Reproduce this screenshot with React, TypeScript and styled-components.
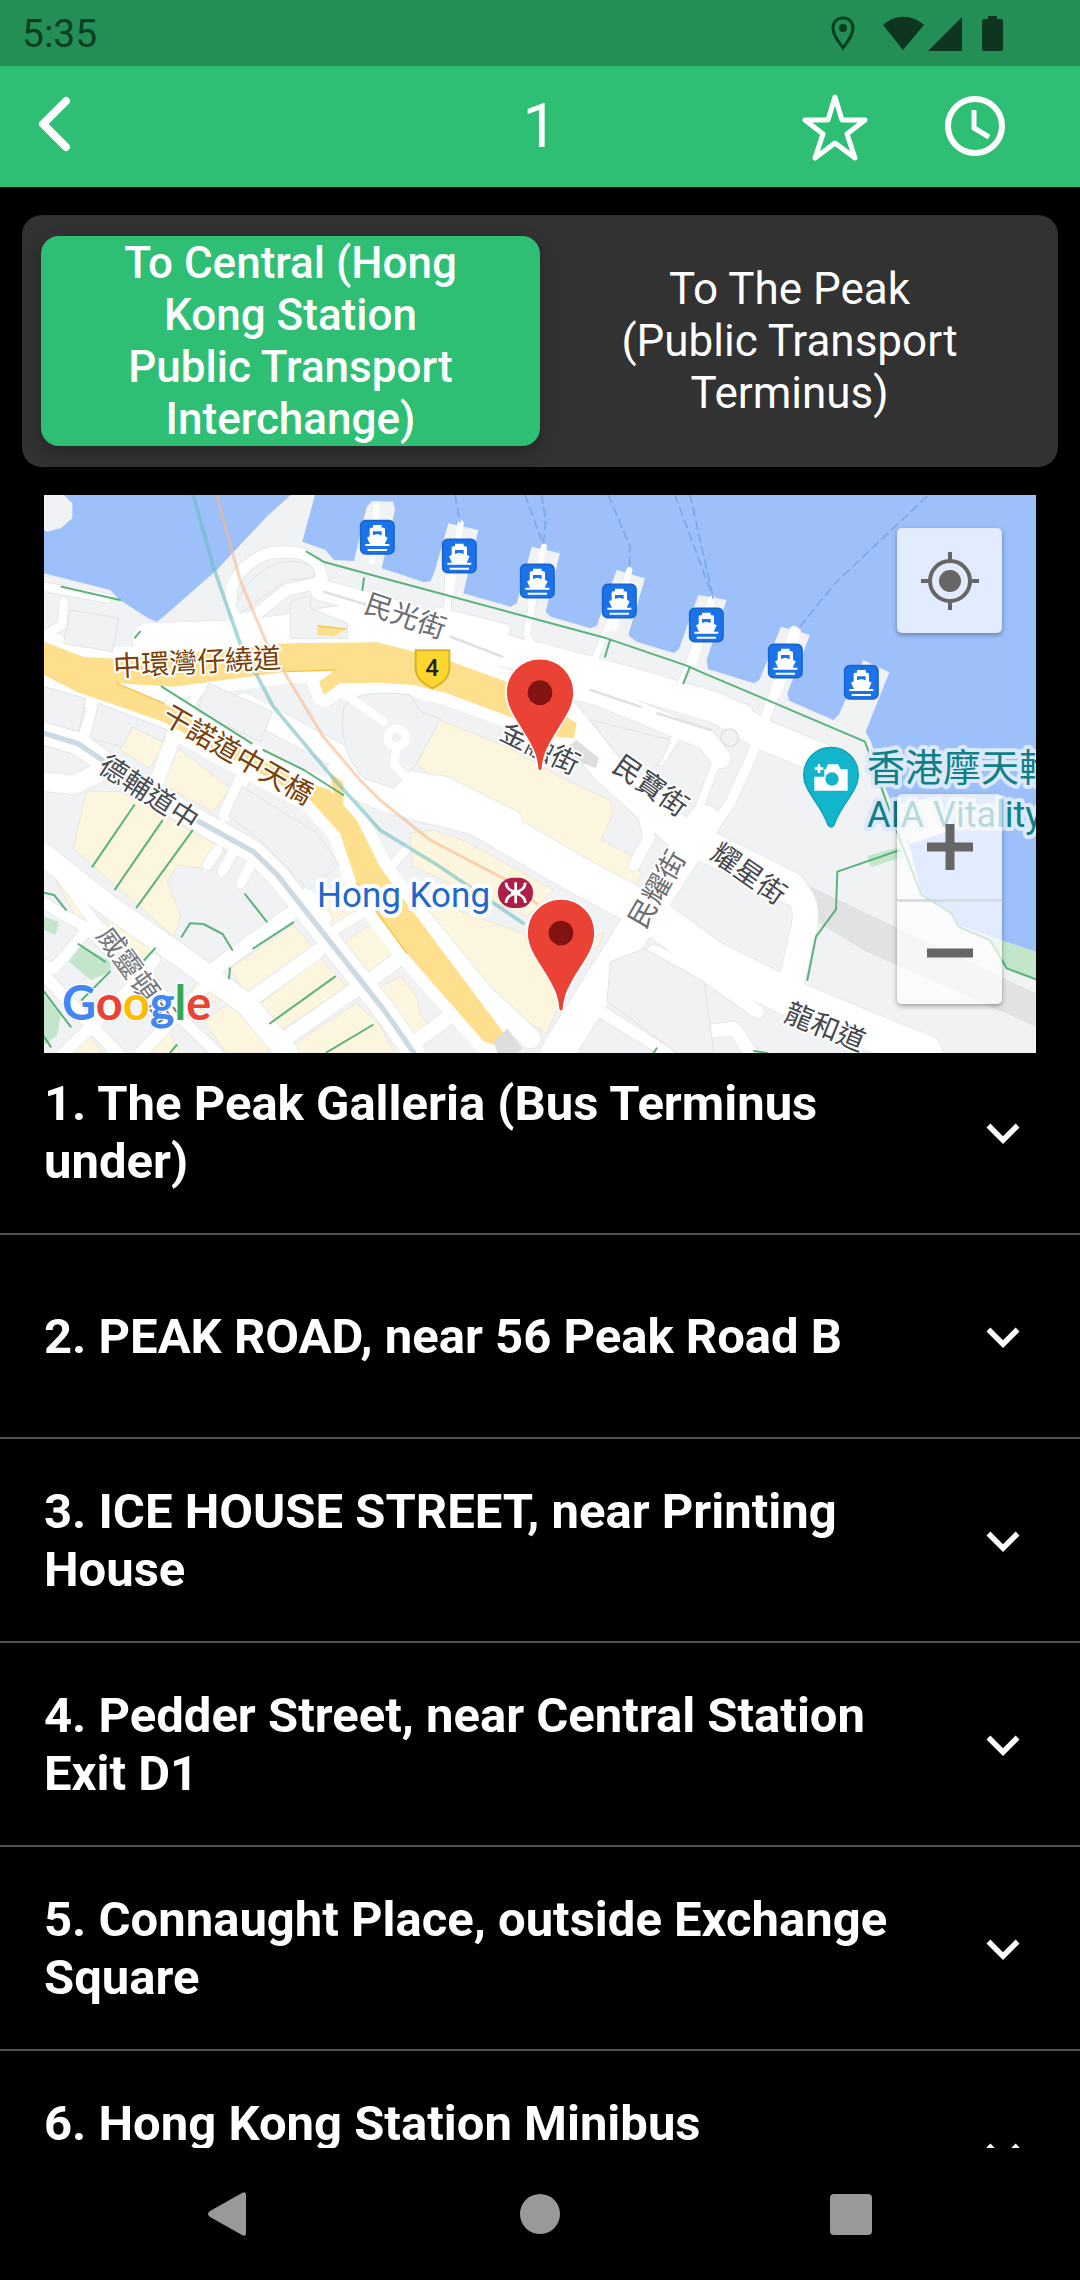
import React, { useState } from "react";
import styled, { createGlobalStyle } from "styled-components";

const GlobalStyle = createGlobalStyle`
  * { box-sizing: border-box; }
  body { margin: 0; background: #000; }
  button { font: inherit; color: inherit; border: 0; padding: 0; background: none; cursor: pointer; }
`;

const Screen = styled.div`
  display: flex;
  flex-direction: column;
  height: 100vh;
  overflow: hidden;
  background: #000;
  color: #fff;
  font-family: Roboto, "Noto Sans CJK TC", sans-serif;
`;

const StatusBar = styled.div`
  display: flex;
  flex: none;
  align-items: center;
  justify-content: space-between;
  height: 66px;
  padding: 2px 77px 0 22px;
  background: #238f57;
  color: #06401f;
  font-size: 39px;
  line-height: 48px;
`;

const StatusIcons = styled.div`
  display: flex;
  align-items: center;
  color: #0d3520;
  svg { display: block; }
`;

const Header = styled.header`
  display: grid;
  flex: none;
  grid-template-columns: 1fr auto 1fr;
  align-items: center;
  height: 121px;
  padding: 0 66px 2px 22px;
  background: #2ebf74;
`;

const Title = styled.h1`
  margin: 0 0 0 44px;
  font-size: 62px;
  font-weight: 400;
  line-height: 72px;
`;

const HeaderActions = styled.div`
  display: flex;
  justify-content: flex-end;
  gap: 71px;
`;

const IconButton = styled.button`
  display: flex;
  align-items: center;
  justify-self: start;
  svg { display: block; }
`;

const Tabs = styled.div`
  display: grid;
  flex: none;
  grid-template-columns: 1fr 1fr;
  margin: 28px 22px 28px;
  padding: 21px 19px;
  border-radius: 20px;
  background: #323232;
`;

const Tab = styled.button<{ $active: boolean }>`
  min-height: 210px;
  padding: 0 66px;
  border-radius: 18px;
  background: ${(p) => (p.$active ? "#2ebf74" : "transparent")};
  box-shadow: ${(p) => (p.$active ? "0 6px 16px rgba(0, 0, 0, 0.25)" : "none")};
  font-size: 44px;
  font-weight: ${(p) => (p.$active ? 500 : 400)};
  line-height: 52px;
  text-align: center;
`;

const MapFrame = styled.section`
  position: relative;
  flex: none;
  margin: 0 44px;
  aspect-ratio: 16 / 9;
  overflow: hidden;
  background: #f1f3f4;
`;

const MapDrawing = styled.svg`
  display: block;
  width: 100%;
  height: 100%;
`;

const MapControls = styled.div`
  position: absolute;
  inset: 33px 34px 49px auto;
  display: flex;
  flex-direction: column;
  justify-content: space-between;
`;

const ControlGroup = styled.div`
  border-radius: 5px;
  background: rgba(255, 255, 255, 0.7);
  box-shadow: 0 2px 5px rgba(0, 0, 0, 0.35);
`;

const MapButton = styled.button`
  display: flex;
  align-items: center;
  justify-content: center;
  width: 105px;
  height: 105px;
  color: #666;
  & + & { border-top: 3px solid rgba(210, 214, 220, 0.8); }
`;

const StopViewport = styled.div`
  flex: 1;
  min-height: 0;
  overflow: hidden;
`;

const StopList = styled.ol`
  margin: -22px 0 0;
  padding: 0;
  list-style: none;
`;

const StopRow = styled.button`
  display: flex;
  align-items: center;
  justify-content: space-between;
  gap: 56px;
  width: 100%;
  min-height: 204px;
  padding: 2px 44px 0;
  border-bottom: 2px solid #505050;
  font-size: 49px;
  font-weight: 700;
  line-height: 58px;
  text-align: left;
  svg { display: block; flex: none; }
`;

const NavBar = styled.nav`
  display: flex;
  flex: none;
  align-items: center;
  justify-content: center;
  gap: 249px;
  height: 132px;
  color: #999;
`;

const NavButton = styled.button`
  display: flex;
  align-items: center;
  justify-content: center;
  width: 62px;
  height: 62px;
`;

const WATER = [
  "M0 0H740L668 65 518 225 353 370 338 380 313 370 228 315 198 285 0 235Z",
  "M813 0L775 140 845 165 870 195 930 198 968 35 985 18 1048 20 1053 45 1013 220 1060 235 1140 262 1160 258 1173 225 1213 85 1303 105 1258 295 1400 335 1418 325 1463 155 1548 175 1505 350 1520 365 1640 400 1658 392 1718 225 1803 250 1753 420 1778 440 1890 474 1905 462 1963 300 2048 315 1988 495 1992 522 2130 565 2146 555 2211 395 2298 420 2230 595 2236 617 2368 675 2384 660 2458 495 2536 532 2465 710 2483 745 2523 875 2598 1060 2633 1200 2718 1250 2743 1290 2838 1325 2976 1370V0Z",
];

const CREAM = [
  "M268 695L363 745 318 820 228 765Z",
  "M403 760L558 880 508 950 358 870Z",
  "M128 890H230L430 1000 545 1065 505 1125 400 1110 370 1160 410 1260 390 1325 88 1060Z",
  "M1188 675L1388 755 1548 845 1640 890 1698 915 1708 955 1670 1035 1760 1080 1793 1140 1753 1205 1408 1015 1248 925 1188 865 1118 805Z",
  "M1098 1015L1168 1005 1268 1040 1528 1185 1448 1265 1108 1115Z",
  "M1118 1215L1208 1235 1438 1315 1548 1525 1508 1615 1360 1525 1248 1415Z",
  "M1640 1340L1678 1310 1665 1350 1640 1365Z",
  "M558 1420L748 1290 808 1355 608 1495Z",
  "M643 1530L828 1390 908 1475 698 1615Z",
  "M738 1655L938 1525 1008 1590 1050 1674H750Z",
  "M478 1575L558 1525 678 1655 668 1674H548Z",
  "M808 1245L910 1160 950 1235 875 1305Z",
  "M903 1340L1010 1270 1088 1380 985 1445Z",
  "M1010 1475L1070 1445 1120 1510 1130 1560 1160 1600 1120 1630Z",
  "M78 1110L180 1230 330 1365 300 1395 200 1300Z",
  "M18 1120L120 1265 105 1285Z",
  "M60 1674L125 1605 175 1674Z",
  "M270 1674L360 1580 410 1674Z",
  "M430 1510L460 1455 525 1500 450 1580Z",
];

const PARKS = [
  "M2838 1325L2976 1370V1453L2888 1420Z",
  "M75 1400L110 1350 200 1400 200 1430 140 1455Z",
  "M0 1265L45 1280 35 1320 0 1305Z",
  "M0 1500L50 1560 40 1620 0 1650Z",
  "M2470 1082L2565 1057 2580 1085 2480 1117Z",
];

const BLOCKS = [
  "M80 345L225 370 205 470 60 445Z",
  "M0 575L125 610 105 710 0 680Z",
  "M165 625L370 705 355 740 265 695 235 755 140 730Z",
  "M495 565L685 650 650 740 460 650Z",
  "M595 875L820 1015 885 1110 795 1185 655 1040 555 965Z",
  "M575 330C600 270 660 200 740 200S820 240 800 250L730 255 590 355Z",
  "M900 640C920 600 980 585 1100 600L1130 650 1190 672 1118 805 1050 880 960 850C910 800 885 720 900 640Z",
  "M740 320L800 300V340L910 385V430H740Z",
  "M1640 675L1880 735 1850 800 1790 850 1720 780Z",
  "M1700 1400L1800 1360 1980 1460 2010 1674H1900L1690 1520Z",
];

const GREEN_WALKS = [
  "M788 170L838 200 953 232 1008 247 1448 365 1688 430 1928 512 1968 530 2158 610 2463 740 2513 880 2568 1035 2633 1200 2723 1255 2743 1295 2838 1335 2888 1420 2976 1453",
  "M53 275L228 315", "M353 575L623 745M658 765L780 825 898 900", "M273 428L288 410",
  "M1698 435L1683 485", "M1938 515L1918 565", "M960 250L955 285",
  "M271 930L145 1115", "M355 977L213 1183", "M445 1007L278 1237", "M603 1197L668 1280",
  "M413 1325L438 1285 478 1287 536 1317 565 1365", "M748 1282L628 1360", "M558 1420L555 1450",
  "M873 1445L678 1585", "M986 1590L848 1672", "M333 1360L301 1395", "M0 1193L30 1200 66 1245",
  "M103 1347L183 1400M198 1430L113 1515", "M0 1490L80 1595", "M0 1625L20 1655", "M398 1650L378 1674",
  "M2568 1065L2380 1130 2376 1243 2316 1325 2290 1455", "M1838 1660L1828 1674", "M2130 1668L2170 1674",
];

const ROADS: [number, string][] = [
  [34, "M310 450L548 395 628 365 728 285 830 262 860 290"],
  [34, "M590 370C550 320 550 270 600 220C650 170 700 165 770 175C820 190 838 230 835 280"],
  [62, "M830 285L1000 330 1220 400 1450 470"],
  [36, "M1180 355L1380 405M1310 450L1340 400"],
  [90, "M310 430L620 420 900 375 1208 440 1488 490 1768 565 2020 640 2160 720 2330 790"],
  [60, "M1488 560L1660 600 1988 735 2030 790"],
  [28, "M1968 590L2110 645M1968 650L2160 740"],
  [20, "M1215 200L1210 350M1475 270L1448 420 1480 470M1720 330L1670 450 1640 520M1965 420L1930 520 1890 610"],
  [30, "M2250 410L2200 570 2160 680 2120 790 2060 920 2000 1010"],
  [24, "M1900 720L1850 800M2025 780L1950 980"],
  [96, "M1560 660L1690 820 1900 1010 2080 1100 2240 1180"],
  [76, "M2200 1150C2270 1190 2295 1220 2280 1300L2240 1470"],
  [70, "M600 630L880 780 1010 850 1200 880 1400 980"],
  [110, "M900 840L1040 900 1300 965 1600 1140 1808 1250 2000 1390 2240 1510 2480 1610 2640 1674"],
  [100, "M1980 980L1780 1290 1660 1480 1540 1674"],
  [34, "M1800 960L1815 1030 1770 1110M1640 1530L1870 1674"],
  [40, "M1830 1370L2000 1450 2140 1550"],
  [40, "M1970 1674L1990 1610 2070 1600 2120 1674"],
  [66, "M0 715L100 745 200 815 450 970 628 1070 700 1140 1020 1545 1110 1674"],
  [66, "M0 1080L190 1230 420 1390 610 1530 730 1674"],
  [56, "M0 860L90 870 160 835"],
  [44, "M155 630L118 750M395 710L338 860M600 840L545 960"],
  [44, "M735 1260L500 1430M820 1370L610 1520M925 1490L710 1640M1080 1380L960 1470M1210 1570L1100 1650"],
  [30, "M880 1300L960 1250M790 1190L850 1270M520 1065L490 1110M565 1075L535 1130M620 1110L590 1165"],
  [32, "M20 1100L150 1280 30 1420 0 1410M0 1225L130 1300 190 1360M150 1280L280 1400 400 1560 520 1674"],
  [36, "M0 1440L150 1600 220 1674M60 1674L260 1480 330 1395M290 1674L440 1520 520 1440"],
  [60, "M1100 1230L1320 1500 1460 1630"],
  [26, "M1020 1140L1090 1060M990 660L1060 790 1110 870 1040 880"],
  [26, "M0 420L55 390 60 320M0 275L190 310"],
  [24, "M480 560L430 650M940 610L1040 680"],
];

const HIGHWAY =
  "M0 440L118 485 228 492 480 470 728 445 1000 442 1208 495 1388 560 1500 620 1598 685 1590 730 1538 725 1398 665 1208 595 1108 570 1008 563 888 565 840 600 825 560 873 525 728 530 388 575 218 565 360 625 600 770 780 860 858 885 938 975 1008 1115 1058 1185 1193 1365 1380 1615 1355 1650 1320 1640 1088 1375 1000 1260 938 1165 888 1015 798 915 580 800 358 680 228 635 98 590 0 540Z";

const FERRIES = [
  "M1233 0L1248 80", "M1443 0L1498 150", "M1493 0L1505 75 1498 150", "M1693 0L1758 155 1756 225",
  "M1893 0L2008 310", "M1938 0L2008 310", "M2648 5L2373 265 2268 395",
];

const PIERS = [[1000, 127], [1246, 183], [1480, 258], [1726, 318], [1987, 390], [2224, 498], [2452, 562]];

type RoadLabel = { text: string; x: number; y: number; angle: number; color: string };

const ROAD_LABELS: RoadLabel[] = [
  { text: "中環灣仔繞道", x: 153, y: 165, angle: -3, color: "#7a3f06" },
  { text: "干諾道中天橋", x: 195, y: 258, angle: 30, color: "#7a3f06" },
  { text: "德輔道中", x: 106, y: 296, angle: 33, color: "#4a4d52" },
  { text: "威靈頓街", x: 94, y: 479, angle: 54, color: "#75787c" },
  { text: "民光街", x: 362, y: 119, angle: 19, color: "#6b6e72" },
  { text: "金融街", x: 497, y: 251, angle: 26, color: "#45484d" },
  { text: "民寶街", x: 608, y: 289, angle: 35, color: "#45484d" },
  { text: "民耀街", x: 611, y: 393, angle: -60, color: "#6b6e72" },
  { text: "耀星街", x: 706, y: 377, angle: 35, color: "#45484d" },
  { text: "龍和道", x: 782, y: 530, angle: 22, color: "#45484d" },
];

const MapLabel = styled.text`
  font-family: "Noto Sans CJK TC", sans-serif;
  font-size: 28px;
  text-anchor: middle;
  dominant-baseline: central;
  paint-order: stroke;
  stroke: #fff;
  stroke-width: 4px;
  stroke-linejoin: round;
`;

const PlaceLabel = styled.text<{ $size: number; $halo: string }>`
  font-family: Roboto, "Noto Sans CJK TC", sans-serif;
  font-size: ${(p) => p.$size}px;
  paint-order: stroke;
  stroke: ${(p) => p.$halo};
  stroke-width: 8px;
  stroke-linejoin: round;
`;

const LogoText = styled.text`
  font-family: Lato, sans-serif;
  font-size: 47px;
  font-weight: 700;
  paint-order: stroke;
  stroke: #fff;
  stroke-width: 2px;
`;

const Pier = ({ x, y }: { x: number; y: number }) => (
  <g transform={`translate(${x} ${y})`}>
    <rect x={-50} y={-50} width={100} height={100} rx={15} fill="#1a73e8" stroke="#1765cf" strokeWidth={5} />
    <path
      fill="#fff"
      fillRule="evenodd"
      d="M-13 -37H13V-29H19Q23 -29 23 -24V-3L31 1 22 20H36V26H-36V20H-22L-31 1 -23 -3V-24Q-23 -29 -19 -29H-13ZM-13 -18V-6L0 -10 13 -6V-18ZM-29 35H29V41H-29Z"
    />
  </g>
);

const Marker = ({ x, y }: { x: number; y: number }) => (
  <g transform={`translate(${x} ${y})`}>
    <path
      fill="#ea4335"
      stroke="#fff"
      strokeWidth={5}
      d="M0 -102C58 -102 102 -57 102 0C102 64 44 110 16 184C10 203 8 215 7 230Q0 240 -7 230C-8 215 -10 203 -16 184C-44 110 -102 64 -102 0C-102 -57 -58 -102 0 -102Z"
    />
    <circle r={37} fill="#811411" />
  </g>
);

const MapScene = () => (
  <MapDrawing viewBox="0 0 992 558" preserveAspectRatio="xMidYMid slice" role="img" aria-label="Map of Central piers">
    <g transform="scale(0.333333)" fill="none" strokeLinecap="round" strokeLinejoin="round">
      <rect width={2976} height={1674} fill="#f0f2f4" />
      {WATER.map((d) => <path key={d} d={d} fill="#9dc0fa" />)}
      <path d="M0 0H60L85 25V70L50 100 10 110 0 105Z" fill="#f0f2f4" />
      <path d="M2530 930L2690 905 2720 1005 2598 1048Z" fill="#f0f2f4" />
      <path d="M2258 1155L2976 1495V1595L2468 1370 2308 1275Z" fill="#e2e2e2" />
      {CREAM.map((d) => <path key={d} d={d} fill="#fdf6df" stroke="#ece7d6" strokeWidth={3} />)}
      {PARKS.map((d) => <path key={d} d={d} fill="#c3e6cb" />)}
      {ROADS.map(([w, d]) => <path key={d} d={d} stroke="#e4e6e9" strokeWidth={w + 5} />)}
      {ROADS.map(([w, d]) => <path key={d} d={d} stroke="#fff" strokeWidth={w} />)}
      <path d={HIGHWAY} stroke="#fff" strokeWidth={70} />
      {BLOCKS.map((d) => <path key={d} d={d} fill="#f0f2f4" stroke="#e0e3e6" strokeWidth={3} />)}
      <path d="M905 600L1020 680M1058 760L1050 810 1110 870" stroke="#fff" strokeWidth={24} />
      <path d="M1598 735L1665 790 1655 820 1540 775Z" fill="#dedede" />
      <path d={HIGHWAY} fill="#fddf8e" />
      <path d="M820 392L905 402 870 425 820 420Z" fill="#fddf8e" />
      <path d="M728 530L873 525M218 565L360 625M820 392L905 402M938 1165L1088 1375" stroke="#f5c451" strokeWidth={4} />
      <path d="M858 835L898 860 898 935 870 900Z" fill="#fddf8e" />
      <path d="M1350 1640L1390 1600 1435 1660 1420 1674H1360Z" fill="#dedede" />
      <circle cx={2057} cy={728} r={26} fill="#f0f2f4" stroke="#dcdfe2" strokeWidth={4} />
      <circle cx={1058} cy={728} r={27} stroke="#fff" strokeWidth={24} />
      <path d="M1640 585L1790 635M1840 655L2000 705M840 290L970 330M1220 425L1375 485" stroke="#dfe1e4" strokeWidth={8} />
      <path d="M0 715L100 745 175 795M465 980L628 1070 700 1140 1020 1545 1110 1674" stroke="#ccdae4" strokeWidth={16} />
      <path d="M998 35L985 200M1250 85L1218 300M1500 155L1460 330M1756 225L1710 400M2005 310L1950 500M2262 410L2200 600" stroke="#fff" strokeWidth={18} />
      {GREEN_WALKS.map((d) => <path key={d} d={d} stroke="#5cb27c" strokeWidth={6} />)}
      <path d="M448 0L508 215 588 445 688 635 868 850 1008 1005 1180 1110 1438 1285" stroke="#66b9bb" strokeOpacity={0.55} strokeWidth={11} />
      <path d="M518 0L588 255 668 445 838 725 948 855 1008 915 1158 1035 1388 1155 1478 1225" stroke="#f7b98a" strokeOpacity={0.6} strokeWidth={9} />
      {FERRIES.map((d) => <path key={d} d={d} stroke="#7ba7ea" strokeWidth={5} strokeDasharray="24 16" />)}
      {PIERS.map(([x, y]) => <Pier key={x} x={x} y={y} />)}
    </g>

    {ROAD_LABELS.map((l) => (
      <MapLabel key={l.text} transform={`translate(${l.x} ${l.y}) rotate(${l.angle})`} fill={l.color}>
        {l.text}
      </MapLabel>
    ))}
    <PlaceLabel x={273} y={412} fill="#2167cc" $size={35} $halo="#fff">Hong Kong</PlaceLabel>
    <PlaceLabel x={823} y={286} fill="#0f7f88" $size={38} $halo="#dbe9fb">香港摩天輪</PlaceLabel>
    <PlaceLabel x={823} y={332} fill="#0f7f88" $size={36} $halo="#dbe9fb">AIA Vitality</PlaceLabel>

    <g transform="scale(0.333333)">
      <path d="M1115 466H1216V520C1216 552 1190 566 1165 580C1140 566 1115 552 1115 520Z" fill="#fdd62f" stroke="#d9b22c" strokeWidth={6} />
      <rect x={1362} y={1148} width={105} height={91} rx={44} fill="#ac1e48" />
      <path
        d="M1386 1163C1388 1198 1442 1198 1444 1163M1386 1224C1388 1188 1442 1188 1444 1224M1415 1162V1225M1401 1194H1429"
        fill="none" stroke="#fff" strokeWidth={8}
      />
      <path d="M2361 757C2408 757 2443 794 2443 840C2443 890 2392 925 2371 988Q2361 1005 2351 988C2330 925 2279 890 2279 840C2279 794 2314 757 2361 757Z" fill="#12b5cb" stroke="#0fa0b4" strokeWidth={4} />
      <path d="M2341 823H2345L2352 808H2382L2390 823H2411V887H2311V845H2341ZM2321 808H2329V817H2338V825H2329V834H2321V825H2312V817H2321Z" fill="#fff" />
      <circle cx={2364} cy={852} r={20} fill="#12b5cb" />
      <Marker x={1488} y={593} />
      <Marker x={1551} y={1314} />
    </g>
    <text x={388} y={181} fontSize={24} fontWeight={500} textAnchor="middle" fill="#222">4</text>
    <LogoText x={18} y={525}>
      <tspan fill="#4285f4">G</tspan>
      <tspan fill="#ea4335">o</tspan>
      <tspan fill="#fbbc05">o</tspan>
      <tspan fill="#4285f4">g</tspan>
      <tspan fill="#34a853">l</tspan>
      <tspan fill="#ea4335">e</tspan>
    </LogoText>
  </MapDrawing>
);

const DIRECTIONS = [
  "To Central (Hong Kong Station Public Transport Interchange)",
  "To The Peak (Public Transport Terminus)",
];

const STOPS = [
  "The Peak Galleria (Bus Terminus under)",
  "PEAK ROAD, near 56 Peak Road B",
  "ICE HOUSE STREET, near Printing House",
  "Pedder Street, near Central Station Exit D1",
  "Connaught Place, outside Exchange Square",
  "Hong Kong Station Minibus Terminus",
];

export default function App() {
  const [direction, setDirection] = useState(0);

  return (
    <Screen>
      <GlobalStyle />
      <StatusBar>
        <span>5:35</span>
        <StatusIcons>
          <svg width="172" height="36" viewBox="0 0 172 36" fill="currentColor" aria-hidden="true">
            <path d="M12 2C6 2 2 6 2 12C2 19 7 25 12 32C17 25 22 19 22 12C22 6 18 2 12 2Z" fill="none" stroke="#06401f" strokeWidth="3" />
            <circle cx="12" cy="12" r="4" fill="#06401f" />
            <path d="M52 9C64 -2 81 -2 93 9L72 34Z" />
            <path d="M131 1V35H97Z" />
            <path d="M157 0H166V3H170Q172 3 172 5V33Q172 35 170 35H153Q151 35 151 33V5Q151 3 153 3H157Z" />
          </svg>
        </StatusIcons>
      </StatusBar>

      <Header>
        <IconButton aria-label="Back">
          <svg width="64" height="66" viewBox="0 0 64 66" fill="none" stroke="#fff" strokeWidth="8" strokeLinecap="round" strokeLinejoin="round">
            <path d="M44 8L21 31 44 54" />
          </svg>
        </IconButton>
        <Title>1</Title>
        <HeaderActions>
          <IconButton aria-label="Add to favourites">
            <svg width="76" height="70" viewBox="0 0 76 70" fill="none" stroke="#fff" strokeWidth="5" strokeLinejoin="round">
              <path d="M38 6L45 29H68L50 43 58 67 38 52 18 67 26 43 8 29H31Z" />
            </svg>
          </IconButton>
          <IconButton aria-label="Timetable">
            <svg width="70" height="70" viewBox="0 0 70 70" fill="none" stroke="#fff">
              <circle cx="31" cy="35" r="27" strokeWidth="6" />
              <path d="M30 19V37L45 46" strokeWidth="5" />
            </svg>
          </IconButton>
        </HeaderActions>
      </Header>

      <Tabs role="tablist">
        {DIRECTIONS.map((name, i) => (
          <Tab key={name} role="tab" aria-selected={direction === i} $active={direction === i} onClick={() => setDirection(i)}>
            {name}
          </Tab>
        ))}
      </Tabs>

      <MapFrame>
        <MapScene />
        <MapControls>
          <ControlGroup>
            <MapButton aria-label="My location">
              <svg width="60" height="60" viewBox="0 0 60 60" fill="none" stroke="currentColor" strokeWidth="4">
                <circle cx="30" cy="30" r="20" />
                <circle cx="30" cy="30" r="11" fill="currentColor" stroke="none" />
                <path d="M30 1V10M30 50V59M1 30H10M50 30H59" />
              </svg>
            </MapButton>
          </ControlGroup>
          <ControlGroup>
            <MapButton aria-label="Zoom in">
              <svg width="46" height="46" viewBox="0 0 46 46" stroke="currentColor" strokeWidth="9"><path d="M23 0V46M0 23H46" /></svg>
            </MapButton>
            <MapButton aria-label="Zoom out">
              <svg width="46" height="46" viewBox="0 0 46 46" stroke="currentColor" strokeWidth="9"><path d="M0 23H46" /></svg>
            </MapButton>
          </ControlGroup>
        </MapControls>
      </MapFrame>

      <StopViewport>
        <StopList>
          {STOPS.map((stop, i) => (
            <li key={stop}>
              <StopRow aria-expanded={false}>
                <span>{`${i + 1}. ${stop}`}</span>
                <svg width="66" height="66" viewBox="0 0 24 24" fill="#fff" aria-hidden="true">
                  <path d="M16.59 8.59L12 13.17 7.41 8.59 6 10l6 6 6-6z" />
                </svg>
              </StopRow>
            </li>
          ))}
        </StopList>
      </StopViewport>

      <NavBar>
        <NavButton aria-label="System back">
          <svg width="48" height="48" viewBox="0 0 48 48" fill="currentColor"><path d="M37 3Q41 1 41 5V43Q41 47 37 45L5 27Q1 24 5 21Z" /></svg>
        </NavButton>
        <NavButton aria-label="Home">
          <svg width="48" height="48" viewBox="0 0 48 48" fill="currentColor"><circle cx="24" cy="24" r="20" /></svg>
        </NavButton>
        <NavButton aria-label="Recent apps">
          <svg width="48" height="48" viewBox="0 0 48 48" fill="currentColor"><rect x="3" y="4" width="42" height="41" rx="4" /></svg>
        </NavButton>
      </NavBar>
    </Screen>
  );
}
